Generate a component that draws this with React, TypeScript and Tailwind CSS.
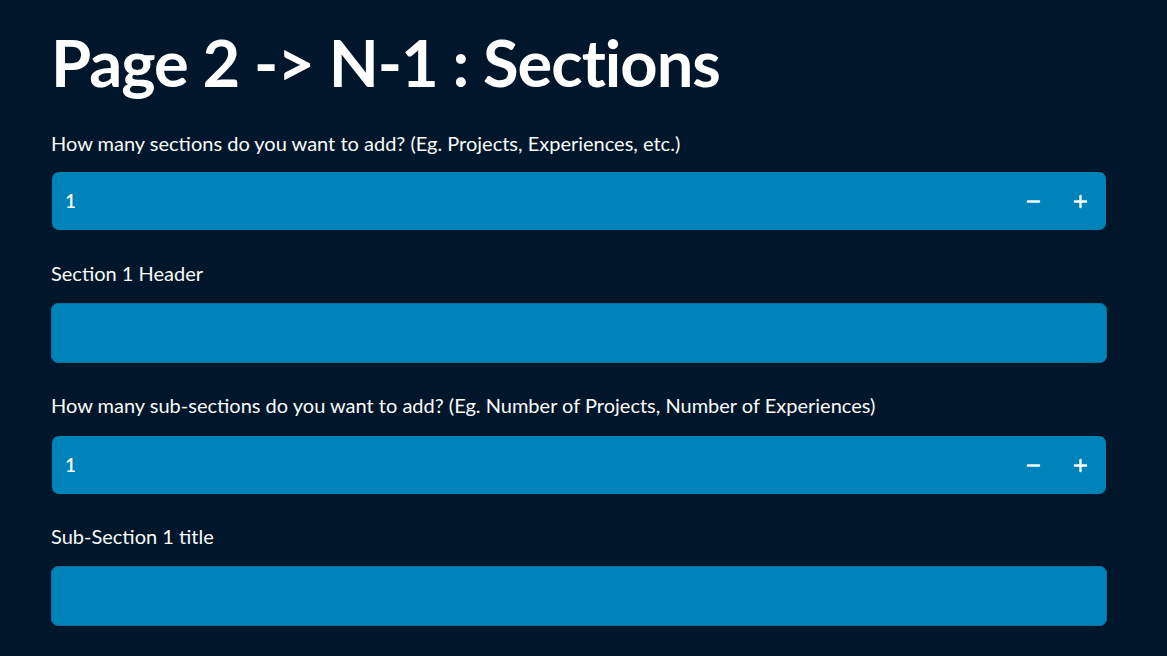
import { Minus, Plus } from "lucide-react";

const font = { fontFamily: "Lato, 'Noto Sans', sans-serif" };

function NumberField({ value }: { value: string }) {
  return (
    <div className="mx-px flex h-[58px] items-center rounded-[7px] bg-[#0083b8] pl-[13px] pr-[2px]">
      <span className="flex-1 text-[19px] font-semibold text-[#fafafa]">{value}</span>
      <button className="flex h-[58px] w-[47px] items-center justify-center text-white">
        <Minus size={19} strokeWidth={3} />
      </button>
      <button className="flex h-[58px] w-[47px] items-center justify-center text-white">
        <Plus size={19} strokeWidth={3} />
      </button>
    </div>
  );
}

function TextField() {
  return <div className="h-[60px] rounded-[7px] border border-[#0b6f9c] bg-[#0083b8]" />;
}

function Label({ children }: { children: string }) {
  return <div className="text-[20px] leading-[26px] text-[#fafafa]">{children}</div>;
}

export default function App() {
  return (
    <div className="min-h-[656px] bg-[#00172b] pl-[51px] pr-[60px] pt-[22px]" style={font}>
      <h1 className="text-[65px] font-bold leading-[80px] tracking-[-1px] text-white">
        Page 2 -&gt; N-1 : Sections
      </h1>
      <div className="mt-[28px] flex flex-col">
        <Label>How many sections do you want to add? (Eg. Projects, Experiences, etc.)</Label>
        <div className="mt-[16px]">
          <NumberField value="1" />
        </div>
        <div className="mt-[30px]">
          <Label>Section 1 Header</Label>
        </div>
        <div className="mt-[17px]">
          <TextField />
        </div>
        <div className="mt-[29px]">
          <Label>How many sub-sections do you want to add? (Eg. Number of Projects, Number of Experiences)</Label>
        </div>
        <div className="mt-[18px]">
          <NumberField value="1" />
        </div>
        <div className="mt-[29px]">
          <Label>Sub-Section 1 title</Label>
        </div>
        <div className="mt-[17px]">
          <TextField />
        </div>
      </div>
    </div>
  );
}
